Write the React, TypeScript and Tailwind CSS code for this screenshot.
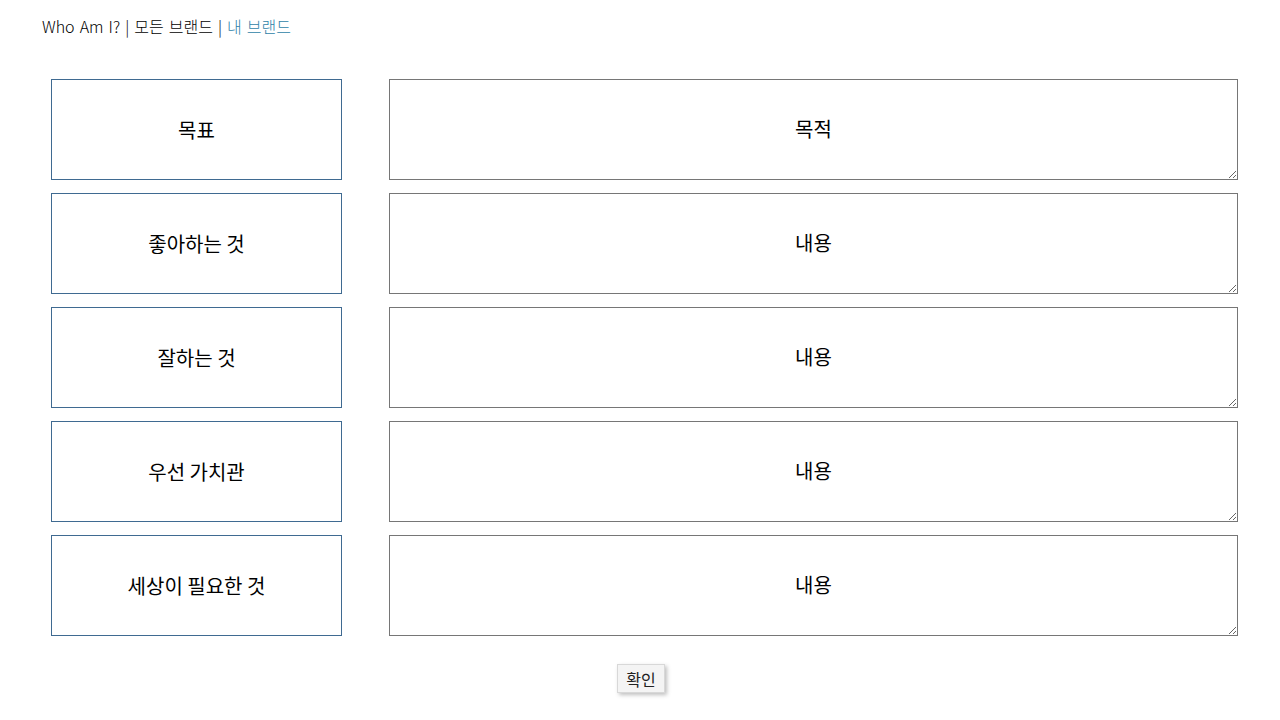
import React from "react";

const rows = [
  { label: "목표", value: "목적" },
  { label: "좋아하는 것", value: "내용" },
  { label: "잘하는 것", value: "내용" },
  { label: "우선 가치관", value: "내용" },
  { label: "세상이 필요한 것", value: "내용" },
];

export default function App() {
  return (
    <div className="min-h-screen bg-white text-black" style={{ fontFamily: '"Noto Sans CJK KR", "Noto Sans", sans-serif' }}>
      {/* Header */}
      <nav className="pl-[42px] pt-[14px] h-[24px] text-[16px] leading-[24px] font-light text-black [word-spacing:1.5px]">
        Who Am I? | 모든 브랜드 | <span className="text-[#2e7fa8]">내 브랜드</span>
      </nav>

      {/* Rows */}
      <div className="mt-[55px] flex flex-col gap-[13px] pl-[51px] pr-[42px]">
        {rows.map((row, i) => (
          <div key={i} className="flex gap-[47px]">
            <div className="w-[291px] h-[101px] shrink-0 border border-[#3f6a91] flex items-center justify-center text-[20px]">
              {row.label}
            </div>
            <textarea
              readOnly
              defaultValue={row.value}
              className="flex-1 h-[101px] border border-[#767676] text-center text-[20px] leading-[30px] pt-[34px] outline-none resize"
            />
          </div>
        ))}
      </div>

      {/* Submit */}
      <div className="flex justify-center mt-[28px] pl-[2px]">
        <button className="h-[29px] px-[8px] bg-[#f4f4f4] border border-[#d8d8d8] text-[16px] text-[#222] shadow-[2px_2px_4px_rgba(0,0,0,0.25)]">
          확인
        </button>
      </div>
    </div>
  );
}
